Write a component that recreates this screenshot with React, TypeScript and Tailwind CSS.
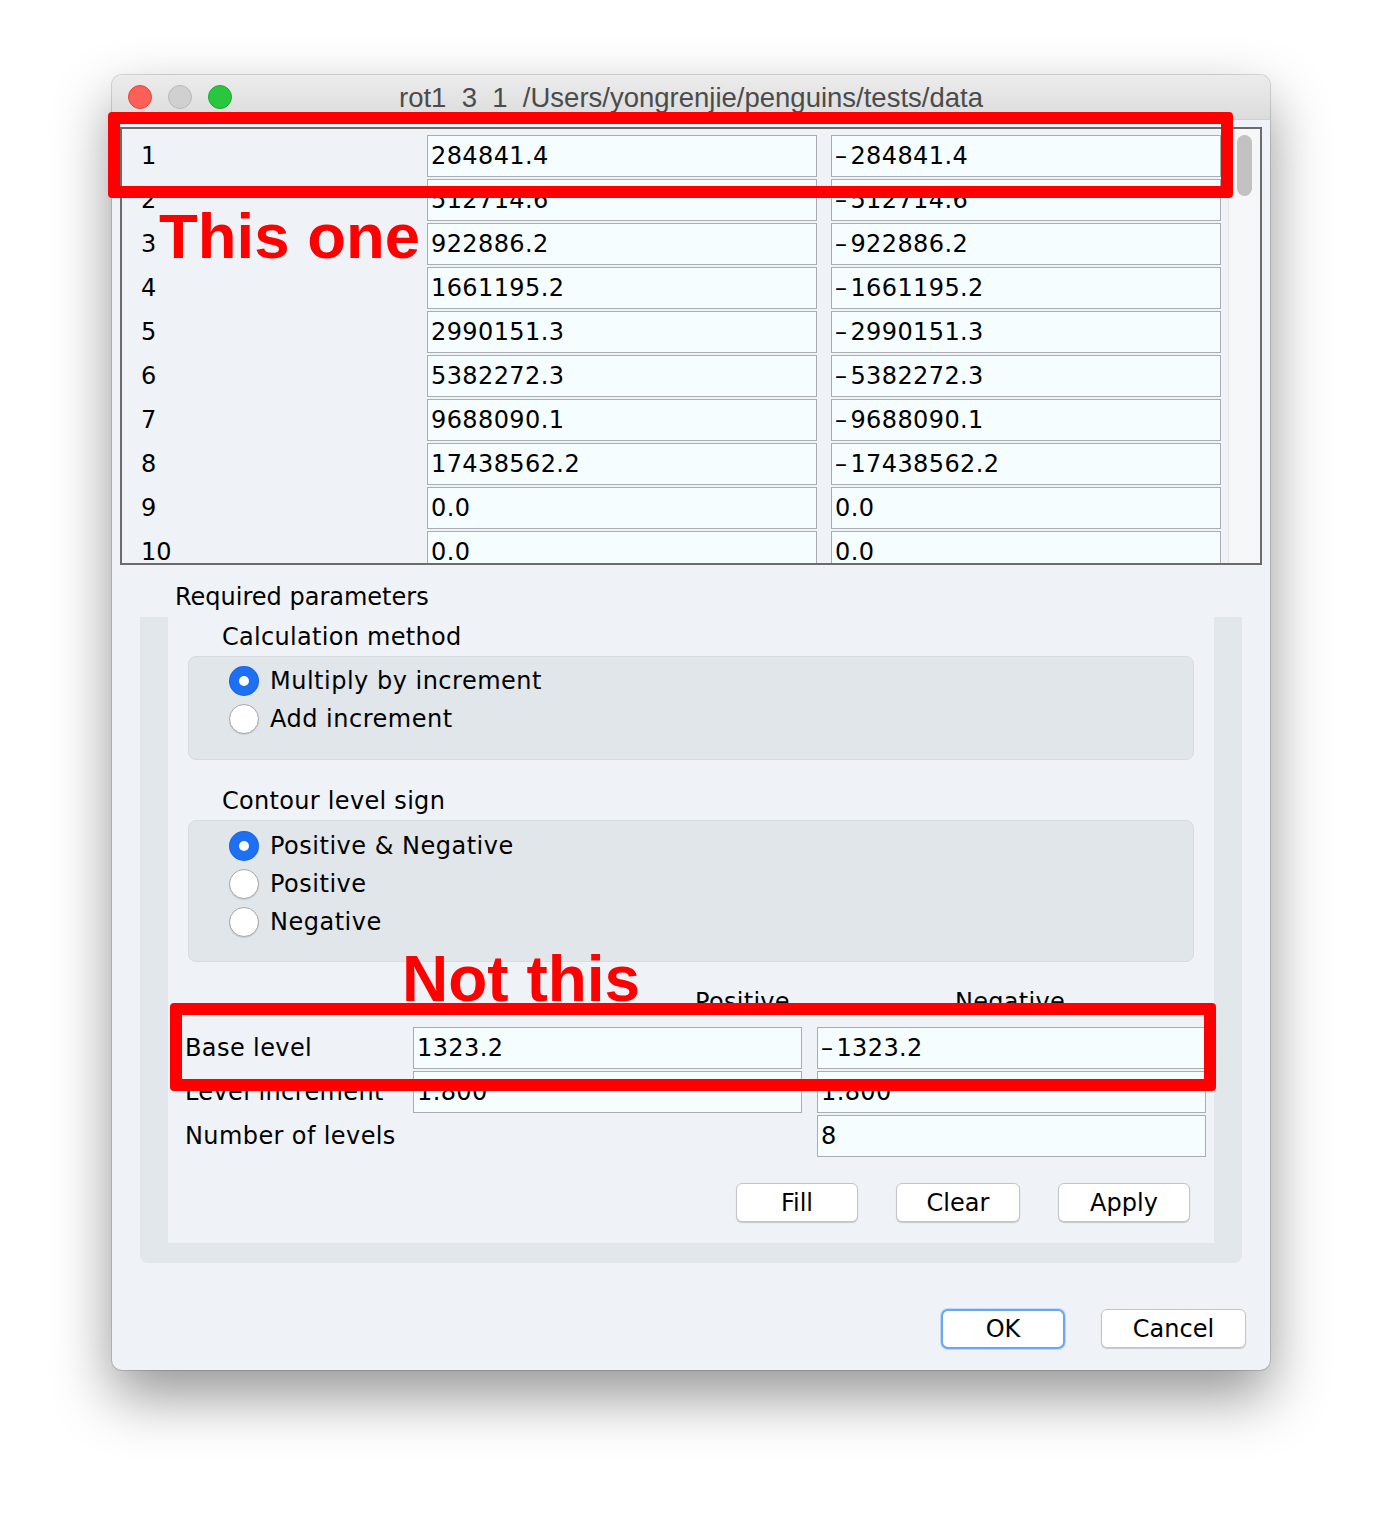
const rows = [
  ["1", "284841.4", "-284841.4"],
  ["2", "512714.6", "-512714.6"],
  ["3", "922886.2", "-922886.2"],
  ["4", "1661195.2", "-1661195.2"],
  ["5", "2990151.3", "-2990151.3"],
  ["6", "5382272.3", "-5382272.3"],
  ["7", "9688090.1", "-9688090.1"],
  ["8", "17438562.2", "-17438562.2"],
  ["9", "0.0", "0.0"],
  ["10", "0.0", "0.0"],
];

// Lucida-style minus is wider than DejaVu's hyphen
const Num = ({ v }: { v: string }) =>
  v.startsWith("-") ? (
    <>
      <span className="mr-[3px]">–</span>
      {v.slice(1)}
    </>
  ) : (
    <>{v}</>
  );

const Radio = ({ checked }: { checked?: boolean }) =>
  checked ? (
    <span className="flex h-[30px] w-[30px] shrink-0 items-center justify-center rounded-full bg-[#1d6ff4] shadow-[inset_0_0_0_1px_rgba(0,40,120,0.15)]">
      <span className="h-[10px] w-[10px] rounded-full bg-white" />
    </span>
  ) : (
    <span className="h-[30px] w-[30px] shrink-0 rounded-full border border-[#a8a8a8] bg-white shadow-[0_1px_1px_rgba(0,0,0,0.12)]" />
  );

const RadioRow = ({ label, checked }: { label: string; checked?: boolean }) => (
  <div className="flex h-[38px] items-center gap-[11px] pt-[2px]">
    <Radio checked={checked} />
    <span className="tracking-[0.5px]">{label}</span>
  </div>
);

const Field = ({ value }: { value?: string }) => (
  <div className="flex h-[42px] w-[389px] items-center border border-[#a9adb1] bg-[#f5fdff] pl-[3px] tracking-[0.4px]">
    {value && <Num v={value} />}
  </div>
);

const Button = ({ title, w, focus }: { title: string; w: string; focus?: boolean }) => (
  <div
    className={
      focus
        ? `flex h-[40px] ${w} items-center justify-center rounded-[7px] border-2 border-[#6aa6f2] bg-white shadow-[0_0_0_1px_rgba(110,165,240,0.35)]`
        : `flex h-[39px] ${w} items-center justify-center rounded-[6px] border border-[#c2c5c8] bg-white shadow-[0_1px_1px_rgba(0,0,0,0.18)]`
    }
  >
    {title}
  </div>
);

export default function App() {
  return (
    <div className="relative h-[1518px] w-[1382px] overflow-hidden bg-white pl-[112px] pt-[75px] font-['DejaVu_Sans',sans-serif] text-[24px] leading-[28px] text-black">
      <div className="flex h-[1295px] w-[1158px] flex-col overflow-hidden rounded-[10px] bg-[#eff3f7] shadow-[0_0_0_1px_rgba(0,0,0,0.14),0_26px_58px_rgba(0,0,0,0.42)]">
        {/* title bar */}
        <div className="relative flex h-[45px] shrink-0 items-center border-b border-[#cfcfcf] bg-linear-to-b from-[#ececec] to-[#dcdcdc] pl-[16px]">
          <div className="flex gap-[16px]">
            <span className="h-[24px] w-[24px] rounded-full border border-[#e2463f] bg-[#fe5f57]" />
            <span className="h-[24px] w-[24px] rounded-full border border-[#b9b9b9] bg-[#d0d0d0]" />
            <span className="h-[24px] w-[24px] rounded-full border border-[#1daa2c] bg-[#29c73f]" />
          </div>
          <div className="absolute inset-0 flex items-center justify-center whitespace-pre pt-[2px] font-['Liberation_Sans',Arial,sans-serif] text-[27.5px] text-[#4b4b4b]">
            rot1  3  1  /Users/yongrenjie/penguins/tests/data
          </div>
        </div>

        {/* table */}
        <div className="ml-[8px] mt-[7px] flex h-[438px] w-[1142px] shrink-0 overflow-hidden border-2 border-[#6b6b6b]">
          <div className="flex-1 pt-[5px]">
            {rows.map(([n, a, b]) => (
              <div key={n} className="flex h-[44px] items-center">
                <div className="w-[305px] pl-[19px]">{n}</div>
                <div className="flex h-[42px] w-[390px] items-center border border-[#a9adb1] bg-[#f5fdff] pl-[3px] tracking-[0.4px]">
                  <Num v={a} />
                </div>
                <div className="ml-[14px] flex h-[42px] w-[390px] items-center border border-[#a9adb1] bg-[#f5fdff] pl-[3px] tracking-[0.4px]">
                  <Num v={b} />
                </div>
              </div>
            ))}
          </div>
          <div className="w-[32px] border-l border-[#e2e4e6] bg-[#f6f7f8] pl-[8px] pt-[6px]">
            <div className="h-[61px] w-[15px] rounded-full bg-[#c2c2c2]" />
          </div>
        </div>

        <div className="ml-[63px] mt-[18px]">Required parameters</div>

        {/* parameters panel */}
        <div className="mx-[28px] mt-[6px] rounded-b-[8px] bg-[#e2e7eb] px-[28px] pb-[20px]">
          <div className="flex flex-col bg-[#eff3f7] pb-[21px]">
            <div className="ml-[54px] mt-[6px] tracking-[0.3px]">Calculation method</div>
            <div className="mx-[20px] mt-[5px] h-[104px] rounded-[8px] border border-[#d7dce0] bg-[#e1e6ea] pl-[40px] pt-[4px]">
              <RadioRow label="Multiply by increment" checked />
              <RadioRow label="Add increment" />
            </div>

            <div className="ml-[54px] mt-[27px] tracking-[0.3px]">Contour level sign</div>
            <div className="mx-[20px] mt-[5px] h-[142px] rounded-[8px] border border-[#d7dce0] bg-[#e1e6ea] pl-[40px] pt-[5px]">
              <RadioRow label="Positive & Negative" checked />
              <RadioRow label="Positive" />
              <RadioRow label="Negative" />
            </div>

            <div className="ml-[17px] mt-[26px] flex h-[28px] tracking-[0.3px]">
              <div className="w-[228px]" />
              <div className="w-[389px] pl-[282px]">Positive</div>
              <div className="ml-[15px] w-[389px] pl-[138px]">Negative</div>
            </div>

            <div className="ml-[17px] mt-[11px] flex flex-col gap-[2px] tracking-[0.4px]">
              <div className="flex items-center">
                <div className="w-[228px]">Base level</div>
                <Field value="1323.2" />
                <div className="ml-[15px]">
                  <Field value="-1323.2" />
                </div>
              </div>
              <div className="flex items-center">
                <div className="w-[228px]">Level increment</div>
                <Field value="1.800" />
                <div className="ml-[15px]">
                  <Field value="1.800" />
                </div>
              </div>
              <div className="flex items-center">
                <div className="w-[228px]">Number of levels</div>
                <div className="w-[389px]" />
                <div className="ml-[15px]">
                  <Field value="8" />
                </div>
              </div>
            </div>

            <div className="mr-[24px] mt-[26px] flex justify-end gap-[38px]">
              <Button title="Fill" w="w-[122px]" />
              <Button title="Clear" w="w-[124px]" />
              <Button title="Apply" w="w-[132px]" />
            </div>
          </div>
        </div>

        <div className="mr-[24px] mt-[46px] flex justify-end gap-[36px]">
          <Button title="OK" w="w-[124px]" focus />
          <Button title="Cancel" w="w-[145px]" />
        </div>
      </div>

      {/* annotations */}
      <div className="absolute left-[108px] top-[112px] h-[86px] w-[1125px] rounded-[4px] border-[12px] border-[#ff0000]" />
      <div className="absolute left-[170px] top-[1003px] h-[88px] w-[1046px] rounded-[4px] border-[12px] border-[#ff0000]" />
      <div className="absolute left-[159px] top-[205px] font-['Liberation_Sans',Arial,sans-serif] text-[63.5px] font-bold leading-none text-[#ff0000]">
        This one
      </div>
      <div className="absolute left-[402px] top-[947px] font-['Liberation_Sans',Arial,sans-serif] text-[64px] font-bold leading-none text-[#ff0000]">
        Not this
      </div>
    </div>
  );
}
